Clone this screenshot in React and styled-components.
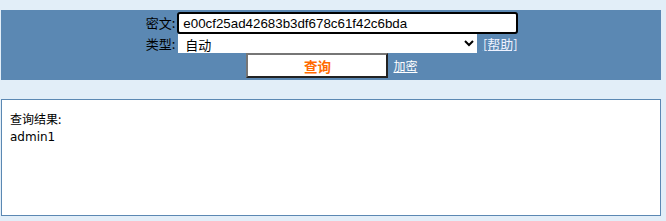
import React from 'react';
import styled, { createGlobalStyle } from 'styled-components';

const GlobalStyle = createGlobalStyle`
  html, body {
    margin: 0;
    padding: 0;
    background: #e2eef8;
  }
  body {
    font-family: "Noto Sans", "Noto Sans CJK SC", sans-serif;
    font-size: 12px;
    color: #000;
  }
`;

const Page = styled.div`
  width: 660px;
  padding: 10px 0 0 1px;
`;

const QueryPanel = styled.form`
  background: #5b88b3;
  padding: 2px 0 2px 2px;
  display: grid;
  grid-template-columns: auto auto auto;
  justify-content: center;
  align-items: center;
`;

const Label = styled.label`
  font-family: "Noto Sans CJK SC", sans-serif;
  font-size: 13px;
  line-height: 14px;
  text-align: right;
  padding-right: 2px;
`;

const CipherInput = styled.input`
  grid-column: span 2;
  box-sizing: border-box;
  width: 341px;
  height: 22px;
  margin: 0;
  padding: 0 4px;
  border: 2px solid #000;
  border-radius: 3px;
  background: #fff;
  font-family: "Liberation Sans", Arial, sans-serif;
  font-size: 13.33px;
  color: #000;
  outline: none;
`;

const TypeSelect = styled.select`
  box-sizing: border-box;
  width: 299px;
  height: 19px;
  margin: 0 0 0 1px;
  padding: 0 0 0 3px;
  border: none;
  background: #fff;
  font-family: "Noto Sans CJK SC", sans-serif;
  font-size: 13px;
  color: #000;
  outline: none;
`;

const HelpLink = styled.a`
  margin-left: 5px;
  font-family: "Noto Sans CJK SC", sans-serif;
  font-size: 13px;
  color: #eef2ff;
  text-decoration: underline;
`;

const ButtonRow = styled.div`
  grid-column: 1 / -1;
  display: flex;
  justify-content: center;
  align-items: center;
  gap: 5px;
  height: 25px;
`;

const SubmitButton = styled.button`
  box-sizing: border-box;
  width: 142px;
  height: 25px;
  margin: 0;
  padding: 0;
  background: #fff;
  border-style: solid;
  border-width: 2px;
  border-color: #767676 #222 #222 #767676;
  font-family: "Noto Sans CJK SC", sans-serif;
  font-size: 13.5px;
  font-weight: bold;
  color: #ff6a00;
  cursor: pointer;
`;

const EncryptLink = styled.a`
  font-family: "Noto Sans CJK SC", sans-serif;
  font-size: 12px;
  color: #fff;
  text-decoration: underline;
`;

const ResultBox = styled.div`
  box-sizing: border-box;
  margin-top: 19px;
  height: 117px;
  padding: 10px 8px;
  background: #fff;
  border: 1px solid #5b88b3;
  font-family: "DejaVu Sans", "Noto Sans CJK SC", sans-serif;
  font-size: 12px;
  line-height: 18px;
`;

const ResultTitle = styled.div`
  font-family: "Noto Sans CJK SC", sans-serif;
`;

export default function App() {
  return (
    <>
      <GlobalStyle />
      <Page>
        <QueryPanel onSubmit={(e) => e.preventDefault()}>
          <Label htmlFor="cipher">密文:</Label>
          <CipherInput id="cipher" defaultValue="e00cf25ad42683b3df678c61f42c6bda" />
          <Label htmlFor="type">类型:</Label>
          <TypeSelect id="type" defaultValue="auto">
            <option value="auto">自动</option>
            <option value="md5">md5</option>
          </TypeSelect>
          <HelpLink href="#">[帮助]</HelpLink>
          <ButtonRow>
            <SubmitButton type="submit">查询</SubmitButton>
            <EncryptLink href="#">加密</EncryptLink>
          </ButtonRow>
        </QueryPanel>
        <ResultBox>
          <ResultTitle>查询结果:</ResultTitle>
          <div>admin1</div>
        </ResultBox>
      </Page>
    </>
  );
}
